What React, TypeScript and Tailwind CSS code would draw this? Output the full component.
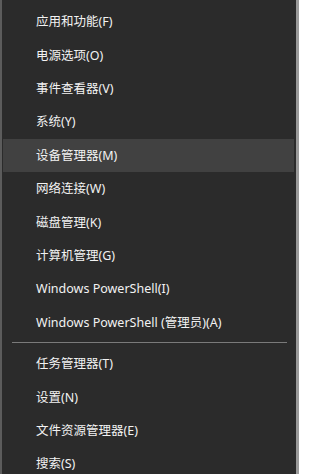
const topItems = [
  '应用和功能(F)',
  '电源选项(O)',
  '事件查看器(V)',
  '系统(Y)',
  '设备管理器(M)',
  '网络连接(W)',
  '磁盘管理(K)',
  '计算机管理(G)',
  'Windows PowerShell(I)',
  'Windows PowerShell (管理员)(A)',
]

const bottomItems = ['任务管理器(T)', '设置(N)', '文件资源管理器(E)', '搜索(S)']

function MenuItem({ label, active }: { label: string; active?: boolean }) {
  return (
    <div
      className={
        'flex h-[33.4px] items-center pl-[33px] pt-[2px] text-[12.5px] text-[#f2f2f2] ' +
        (active ? 'bg-[#414141]' : '')
      }
    >
      {label}
    </div>
  )
}

export default function App() {
  return (
    <div
      className="flex h-[474px] w-[299px] overflow-hidden bg-[#2b2b2b]"
      style={{ fontFamily: '"Noto Sans", "Noto Sans CJK SC", sans-serif' }}
    >
      <div className="w-[2px] bg-[#5c5c5c]" />
      <div className="flex-1 pt-[5px] pl-[1px] pr-[2px]">
        {topItems.map((item, i) => (
          <MenuItem key={item} label={item} active={i === 4} />
        ))}
        <div className="flex h-[8px] items-center pl-[9px] pr-[7px]">
          <div className="h-px w-full bg-[#7a7a7a]" />
        </div>
        {bottomItems.map((item) => (
          <MenuItem key={item} label={item} />
        ))}
      </div>
      <div className="w-[3px] bg-[#9a9a9a]" />
    </div>
  )
}
